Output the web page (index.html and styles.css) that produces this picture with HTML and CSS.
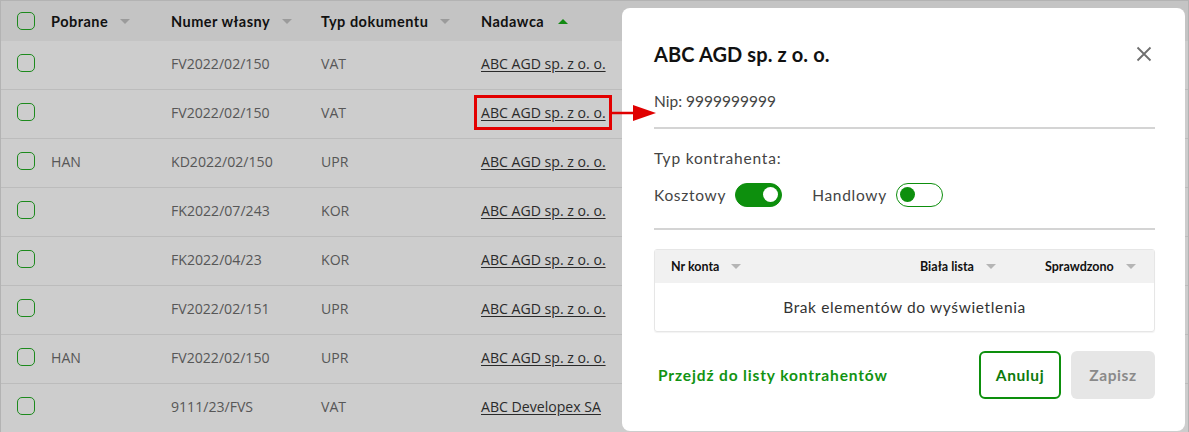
FILE: index.html
```html
<!DOCTYPE html>
<html lang="pl">
<head>
<meta charset="utf-8">
<title>Dokumenty</title>
<link rel="stylesheet" href="styles.css">
</head>
<body>
<div class="frame">
  <div class="table">
    <div class="row head">
      <div class="cell chk"><span class="box"></span></div>
      <div class="cell">Pobrane <span class="sort"></span></div>
      <div class="cell">Numer własny <span class="sort"></span></div>
      <div class="cell">Typ dokumentu <span class="sort"></span></div>
      <div class="cell">Nadawca <span class="sort up"></span></div>
    </div>
    <div class="row">
      <div class="cell chk"><span class="box"></span></div>
      <div class="cell"></div>
      <div class="cell">FV2022/02/150</div>
      <div class="cell">VAT</div>
      <div class="cell"><a class="link">ABC AGD sp. z o. o.</a></div>
    </div>
    <div class="row">
      <div class="cell chk"><span class="box"></span></div>
      <div class="cell"></div>
      <div class="cell">FV2022/02/150</div>
      <div class="cell">VAT</div>
      <div class="cell"><a class="link">ABC AGD sp. z o. o.</a></div>
    </div>
    <div class="row">
      <div class="cell chk"><span class="box"></span></div>
      <div class="cell">HAN</div>
      <div class="cell">KD2022/02/150</div>
      <div class="cell">UPR</div>
      <div class="cell"><a class="link">ABC AGD sp. z o. o.</a></div>
    </div>
    <div class="row">
      <div class="cell chk"><span class="box"></span></div>
      <div class="cell"></div>
      <div class="cell">FK2022/07/243</div>
      <div class="cell">KOR</div>
      <div class="cell"><a class="link">ABC AGD sp. z o. o.</a></div>
    </div>
    <div class="row">
      <div class="cell chk"><span class="box"></span></div>
      <div class="cell"></div>
      <div class="cell">FK2022/04/23</div>
      <div class="cell">KOR</div>
      <div class="cell"><a class="link">ABC AGD sp. z o. o.</a></div>
    </div>
    <div class="row">
      <div class="cell chk"><span class="box"></span></div>
      <div class="cell"></div>
      <div class="cell">FV2022/02/151</div>
      <div class="cell">UPR</div>
      <div class="cell"><a class="link">ABC AGD sp. z o. o.</a></div>
    </div>
    <div class="row">
      <div class="cell chk"><span class="box"></span></div>
      <div class="cell">HAN</div>
      <div class="cell">FV2022/02/150</div>
      <div class="cell">UPR</div>
      <div class="cell"><a class="link">ABC AGD sp. z o. o.</a></div>
    </div>
    <div class="row">
      <div class="cell chk"><span class="box"></span></div>
      <div class="cell"></div>
      <div class="cell">9111/23/FVS</div>
      <div class="cell">VAT</div>
      <div class="cell"><a class="link">ABC Developex SA</a></div>
    </div>
  </div>

  <div class="highlight"></div>
  <svg class="pointer" width="48" height="20" viewBox="0 0 48 20">
    <line x1="0" y1="10" x2="24" y2="10" stroke="#e00000" stroke-width="2.5"/>
    <polygon points="22,2 45,10 22,18" fill="#e00000"/>
  </svg>

  <aside class="panel">
    <div class="panel-head">
      <h1 class="title">ABC AGD sp. z o. o.</h1>
      <svg class="close" width="16" height="16" viewBox="0 0 16 16">
        <path d="M1.5 1.5 L14.5 14.5 M14.5 1.5 L1.5 14.5" stroke="#6f6f6f" stroke-width="1.8" fill="none"/>
      </svg>
    </div>
    <div class="nip">Nip: 9999999999</div>
    <div class="divider"></div>
    <div class="label">Typ kontrahenta:</div>
    <div class="toggles">
      <span class="tlabel">Kosztowy</span>
      <span class="switch on"><span class="knob"></span></span>
      <span class="tlabel second">Handlowy</span>
      <span class="switch off"><span class="knob"></span></span>
    </div>
    <div class="divider lower"></div>
    <div class="inner">
      <div class="inner-head">
        <div class="ih">Nr konta <span class="sort light"></span></div>
        <div class="ih">Biała lista <span class="sort light"></span></div>
        <div class="ih">Sprawdzono <span class="sort light"></span></div>
      </div>
      <div class="inner-empty">Brak elementów do wyświetlenia</div>
    </div>
    <div class="footer">
      <a class="goto">Przejdź do listy kontrahentów</a>
      <div class="buttons">
        <button class="btn cancel">Anuluj</button>
        <button class="btn save">Zapisz</button>
      </div>
    </div>
  </aside>
</div>
</body>
</html>
```

FILE: styles.css
```css
* { box-sizing: border-box; }
html, body { margin: 0; padding: 0; }
body { width: 1189px; height: 432px; overflow: hidden; background: #cdcdcd; }

.frame {
  position: relative;
  width: 1189px;
  height: 432px;
  border: 1px solid #b3b3b3;
  border-bottom: none;
  background: #cdcdcd;
  overflow: hidden;
}

.table { display: flex; flex-direction: column; }
.row {
  display: grid;
  grid-template-columns: 50px 120px 150px 160px 1fr;
  height: 49px;
  border-bottom: 1px solid #bcbcbc;
  padding-bottom: 4px;
  align-items: center;
  font-family: "Open Sans", "Noto Sans", sans-serif;
  font-size: 14.1px;
  color: #575757;
}
.row.head {
  height: 40px;
  padding-bottom: 0;
  background: #c4c4c4;
  border-bottom: none;
  font-family: "Lato", sans-serif;
  font-weight: 700;
  font-size: 14.5px;
  letter-spacing: 0.5px;
  color: #111;
}
.cell { display: flex; align-items: center; white-space: nowrap; }
.cell.chk { padding-left: 16px; }
.box {
  width: 18px; height: 18px;
  border: 1.5px solid #1d8a1d;
  border-radius: 5px;
}
.sort {
  display: inline-block;
  width: 0; height: 0;
  margin-left: 12px;
  border-left: 5px solid transparent;
  border-right: 5px solid transparent;
  border-top: 5px solid #9b9b9b;
}
.sort.up { border-top: none; border-bottom: 5px solid #128a12; margin-left: 14px; }
.sort.light { border-top-color: #b5b5b5; margin-left: 12px; }
.link { color: #2a2a2a; text-decoration: underline; text-underline-offset: 2px; }

.highlight {
  position: absolute;
  left: 473px; top: 94px;
  width: 138px; height: 35px;
  border: 3px solid #e30000;
}
.pointer { position: absolute; left: 610px; top: 102px; z-index: 3; }

.panel {
  position: absolute;
  left: 621px; top: 7px;
  width: 563px; height: 423px;
  background: #fff;
  border-radius: 8px;
  padding: 30px 30px 0 32px;
  font-family: "Lato", sans-serif;
  color: #333;
  z-index: 2;
}
.panel-head { display: flex; justify-content: space-between; align-items: center; height: 32px; }
.title { margin: 0; font-size: 20px; font-weight: 700; color: #111; letter-spacing: 0.1px; }
.close { margin-right: 3px; }
.nip { margin-top: 19px; font-size: 15.5px; color: #444; height: 24px; line-height: 24px; }
.divider { height: 2px; background: #d4d4d4; margin-top: 14px; }
.label { margin-top: 17px; font-size: 15.5px; line-height: 24px; color: #444; letter-spacing: 0.8px; }
.toggles { display: flex; align-items: center; margin-top: 11px; height: 28px; font-size: 15.5px; color: #444; letter-spacing: 0.7px; }
.tlabel.second { margin-left: 30px; }
.switch {
  position: relative;
  width: 47px; height: 24px;
  border-radius: 12px;
  margin-left: 9px;
  border: 1.5px solid #0d8f0d;
}
.switch.on { background: #0d8f0d; }
.switch .knob {
  position: absolute;
  top: 3px;
  width: 15px; height: 15px;
  border-radius: 50%;
}
.switch.on .knob { background: #fff; right: 3px; }
.switch.off .knob { background: #0d8f0d; left: 3px; }
.divider.lower { margin-top: 19px; }

.inner {
  margin-top: 19px;
  border: 1px solid #e6e6e6;
  border-radius: 3px;
  box-shadow: 0 1px 1px rgba(0,0,0,0.05);
}
.inner-head {
  display: grid;
  grid-template-columns: 1fr 125px 125px;
  height: 33px;
  align-items: center;
  background: #f1f1f1;
  font-size: 12.5px;
  font-weight: 700;
  color: #111;
}
.ih { display: flex; align-items: center; padding-left: 16px; }
.inner-empty {
  height: 48px;
  display: flex; align-items: center; justify-content: center;
  font-size: 15.5px;
  letter-spacing: 0.63px;
  color: #333;
}
.footer { display: flex; justify-content: space-between; align-items: center; margin-top: 19px; }
.goto { color: #129312; font-weight: 700; font-size: 15.5px; padding-left: 4px; letter-spacing: 0.86px; }
.buttons { display: flex; gap: 10px; }
.btn {
  height: 48px;
  border-radius: 6px;
  font-family: "Lato", sans-serif;
  font-weight: 700;
  font-size: 15.5px;
  letter-spacing: 0.6px;
}
.btn.cancel { width: 82px; background: #fff; border: 2px solid #0d8f0d; color: #0d7a0d; }
.btn.save { width: 84px; background: #e6e6e6; border: none; color: #8a8a8a; }
```
